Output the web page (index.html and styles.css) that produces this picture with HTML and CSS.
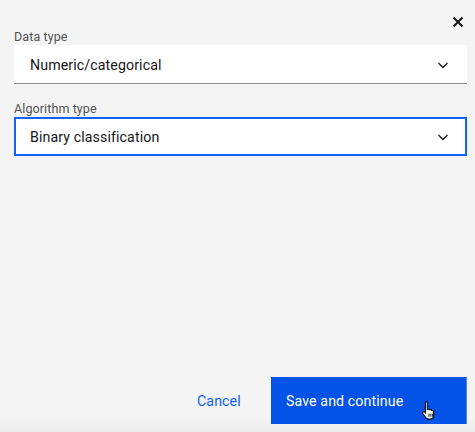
FILE: index.html
```html
<!DOCTYPE html>
<html>
<head>
<meta charset="utf-8">
<link rel="stylesheet" href="styles.css">
</head>
<body>
<div class="modal">
  <div class="header">
    <button class="close" aria-label="Close">
      <svg width="16" height="16" viewBox="0 0 16 16"><path d="M3.5 3.5 L12.5 12.5 M12.5 3.5 L3.5 12.5" stroke="#161616" stroke-width="2" fill="none"/></svg>
    </button>
  </div>
  <div class="body">
    <div class="field">
      <label class="label">Data type</label>
      <div class="select">
        <span class="value">Numeric/categorical</span>
        <svg class="chev" width="16" height="16" viewBox="0 0 16 16"><path d="M3.5 6 L8 10.5 L12.5 6" stroke="#161616" stroke-width="1.3" fill="none"/></svg>
      </div>
    </div>
    <div class="field">
      <label class="label">Algorithm type</label>
      <div class="select focused">
        <span class="value">Binary classification</span>
        <svg class="chev" width="16" height="16" viewBox="0 0 16 16"><path d="M3.5 6 L8 10.5 L12.5 6" stroke="#161616" stroke-width="1.3" fill="none"/></svg>
      </div>
    </div>
  </div>
  <div class="footer">
    <button class="btn ghost">Cancel</button>
    <button class="btn primary">Save and continue
      <svg class="cursor" width="17" height="21" viewBox="0 0 16 20"><path d="M4.5 1.5c.8 0 1.4.6 1.4 1.4v6.2l.6-.3c.7-.3 1.4 0 1.7.6l.3-.1c.7-.3 1.4 0 1.7.6l.2 0c.8-.2 1.5.3 1.6 1.1v3.6c0 2-1.4 3.6-3.4 3.6H7.2c-1.2 0-2.2-.6-2.8-1.6L1.7 13c-.4-.7-.1-1.5.6-1.8.5-.2 1.1 0 1.4.4l.4.6V2.9c0-.8.6-1.4 1.4-1.4z" fill="#fff" stroke="#000" stroke-width="1"/><path d="M7.5 13v3M9.3 13v3M11 13v3" stroke="#000" stroke-width="0.9"/></svg>
    </button>
  </div>
</div>
</body>
</html>
```
FILE: styles.css
```css
html, body {
  margin: 0;
  padding: 0;
}
body {
  width: 475px;
  height: 432px;
  background: #f4f4f4;
  font-family: Roboto, "Noto Sans", sans-serif;
  color: #161616;
  overflow: hidden;
}
.modal {
  height: 432px;
  display: flex;
  flex-direction: column;
  background: linear-gradient(to top, #ececec 0, #f4f4f4 14px);
}
.header {
  height: 28px;
  display: flex;
  justify-content: flex-end;
  padding: 0 5px 0 0;
}
.close {
  width: 24px;
  height: 28px;
  padding: 0;
  margin-top: 8px;
  border: none;
  background: transparent;
  display: flex;
  align-items: center;
  justify-content: center;
}
.body {
  padding: 0 8px 0 14px;
  display: flex;
  flex-direction: column;
  gap: 16px;
}
.field {
  display: flex;
  flex-direction: column;
}
.label {
  font-size: 12.5px;
  line-height: 16px;
  color: #525252;
  letter-spacing: 0.1px;
  height: 17px;
  margin-top: 1px;
  margin-bottom: -1px;
}
.select {
  height: 39px;
  background: #fff;
  border-bottom: 1px solid #8d8d8d;
  display: flex;
  align-items: center;
  justify-content: space-between;
  padding: 1px 16px 0;
  box-sizing: border-box;
}
.select.focused {
  border: 2px solid #0f62fe;
  padding: 0 14px;
}
.value {
  font-size: 14.2px;
  letter-spacing: 0.1px;
  color: #161616;
}
.chev {
  flex: none;
}
.footer {
  margin-top: auto;
  display: flex;
  justify-content: flex-end;
  padding: 0 8px 8px 0;
}
.btn {
  height: 47px;
  border: none;
  font-family: inherit;
  font-size: 14.2px;
  letter-spacing: 0.1px;
  text-align: left;
  padding: 0 15px;
}
.ghost {
  background: transparent;
  color: #0f62fe;
  width: 96px;
  padding-left: 22px;
  padding-top: 1px;
}
.primary {
  width: 196px;
  background: #0353e9;
  color: #fff;
  position: relative;
  border-right: 1px solid #4589ff;
  padding-top: 1px;
}
.cursor {
  position: absolute;
  left: 150px;
  top: 23px;
}
```
